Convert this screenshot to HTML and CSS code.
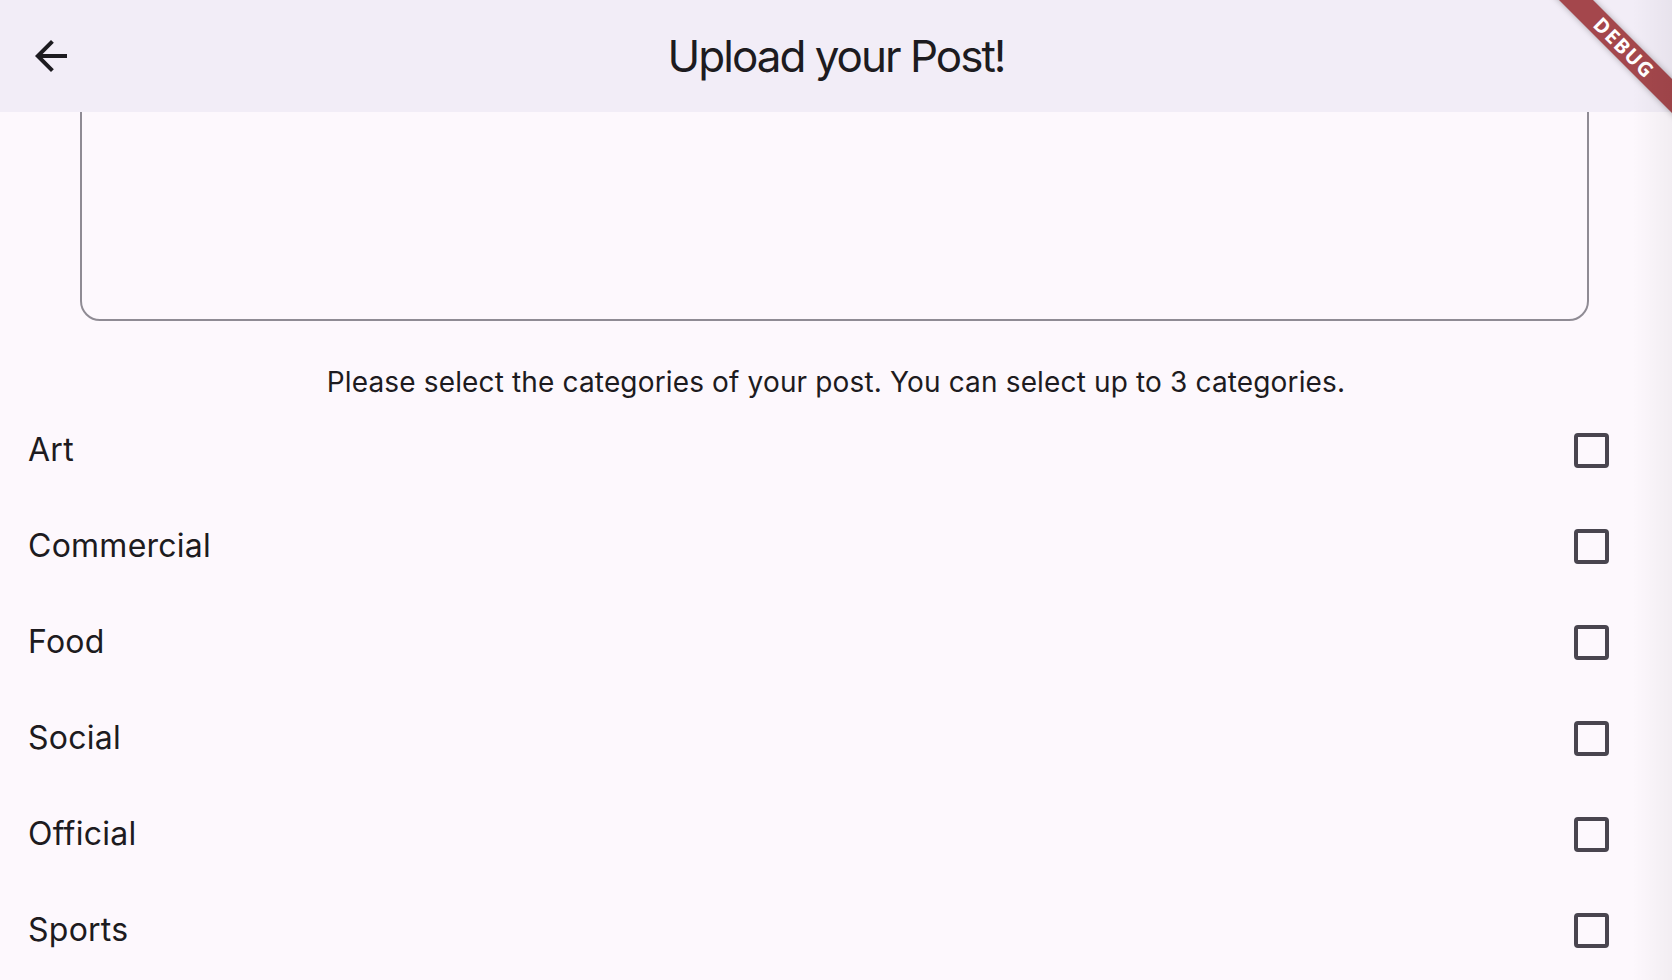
FILE: index.html
```html
<!DOCTYPE html>
<html lang="en">
<head>
<meta charset="utf-8">
<title>Upload your Post!</title>
<link rel="stylesheet" href="styles.css">
</head>
<body>
<header class="appbar">
  <div class="leading">
    <svg class="back-icon" viewBox="0 0 24 24" width="48" height="48" aria-hidden="true">
      <path d="M20 11H7.83l5.59-5.59L12 4l-8 8 8 8 1.41-1.41L7.83 13H20v-2z" fill="#1d1b20"/>
    </svg>
  </div>
  <h1 class="title">Upload your Post!</h1>
  <div class="trailing"></div>
</header>
<main class="content">
  <div class="textfield"></div>
  <p class="hint">Please select the categories of your post. You can select up to 3 categories.</p>
  <ul class="categories">
    <li class="category"><span class="label">Art</span><span class="checkbox"></span></li>
    <li class="category"><span class="label">Commercial</span><span class="checkbox"></span></li>
    <li class="category"><span class="label">Food</span><span class="checkbox"></span></li>
    <li class="category"><span class="label">Social</span><span class="checkbox"></span></li>
    <li class="category"><span class="label">Official</span><span class="checkbox"></span></li>
    <li class="category"><span class="label">Sports</span><span class="checkbox"></span></li>
  </ul>
</main>
<div class="debug-banner">DEBUG</div>
<div class="edge-shade"></div>
</body>
</html>
```

FILE: styles.css
```css
html, body {
  margin: 0;
  padding: 0;
  width: 1672px;
  height: 980px;
  overflow: hidden;
}

body {
  position: relative;
  background: #fdf8fd;
  color: #1d1b20;
  font-family: Inter, "Noto Sans", "Liberation Sans", sans-serif;
}

.appbar {
  height: 112px;
  background: #f2edf7;
  display: grid;
  grid-template-columns: 112px 1fr 112px;
  align-items: center;
}

.leading {
  display: flex;
  align-items: center;
  padding-left: 27px;
}

.back-icon {
  display: block;
}

.title {
  margin: 0;
  text-align: center;
  font-size: 44px;
  font-weight: 400;
  line-height: 56px;
  letter-spacing: -2px;
}

.content {
  height: 868px;
  overflow: hidden;
}

.textfield {
  box-sizing: border-box;
  margin: -60px 83px 0 80px;
  height: 269px;
  border: 2px solid #8f8b94;
  border-radius: 20px;
}

.hint {
  margin: 41px 0 0;
  text-align: center;
  font-size: 28px;
  line-height: 40px;
  letter-spacing: 0.15px;
}

.categories {
  list-style: none;
  margin: 0;
  padding: 0;
}

.category {
  height: 96px;
  display: flex;
  align-items: center;
  justify-content: space-between;
  padding: 0 63px 0 28px;
}

.label {
  font-size: 32px;
  line-height: 48px;
  letter-spacing: 0.25px;
}

.checkbox {
  box-sizing: border-box;
  width: 35px;
  height: 35px;
  border: 4px solid #49454f;
  border-radius: 4px;
}

.debug-banner {
  position: absolute;
  left: 1474px;
  top: 36px;
  width: 300px;
  height: 24px;
  transform: rotate(45deg);
  background: #a4474c;
  box-shadow: 0 0 6px rgba(0, 0, 0, 0.3);
  color: #fff;
  font-family: "Noto Sans", "Liberation Sans", sans-serif;
  font-weight: 700;
  font-size: 20px;
  line-height: 24px;
  letter-spacing: 1.5px;
  text-align: center;
}

.edge-shade {
  position: absolute;
  top: 0;
  right: 0;
  width: 40px;
  height: 980px;
  background: linear-gradient(to right, rgba(0, 0, 0, 0), rgba(0, 0, 0, 0.045));
  pointer-events: none;
}
```
